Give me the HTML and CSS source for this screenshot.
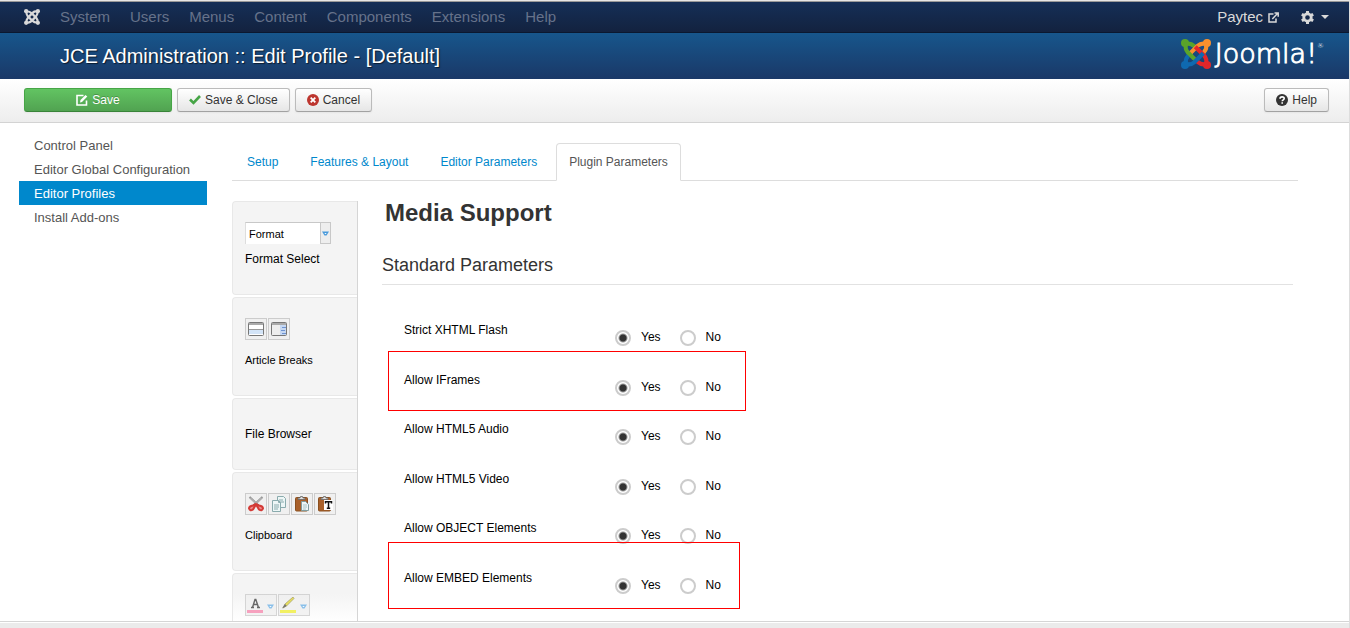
FILE: index.html
```html
<!DOCTYPE html>
<html lang="en">
<head>
<meta charset="utf-8">
<title>JCE Administration :: Edit Profile</title>
<link rel="stylesheet" href="styles.css">
</head>
<body>
<svg class="defs" aria-hidden="true">
  <defs>
    <g id="arm"><circle cx="3.2" cy="3.2" r="3.2" stroke="none"/><path d="M12.500 7.500 10.600 5.700Q7.500 3 4 4 3 8 5.400 10.600L12.600 17.800" fill="none" stroke-width="3.300"/></g>
    <g id="drop"><path d="M0 .5h7L4.500 4.500h-2z"/><path d="M2.300 2h2.400L3.500 3.200z" fill="#fff"/></g>
  </defs>
</svg>
<nav class="navbar">
  <a class="brand" href="#" aria-label="Joomla"><svg width="16" height="16" viewBox="0 0 24 24"><g class="mono"><use href="#arm"/><use href="#arm" transform="rotate(90 12 12)"/><use href="#arm" transform="rotate(180 12 12)"/><use href="#arm" transform="rotate(270 12 12)"/></g></svg></a>
  <div class="menu">
    <a href="#">System</a><a href="#">Users</a><a href="#">Menus</a><a href="#">Content</a><a href="#">Components</a><a href="#">Extensions</a><a href="#">Help</a>
  </div>
  <a class="site" href="#">Paytec <svg width="11" height="11" viewBox="0 0 11 11" fill="none" stroke="#d9d9d9" stroke-width="1.500"><path d="M5.500 2H1v8h7V6.500M4.300 7 9.500 1.500M6.500 1h3.700v3.700"/></svg></a>
  <button class="gear" aria-label="Settings"><svg width="13" height="13" viewBox="0 0 14 14"><circle cx="7" cy="7" r="4" fill="none" stroke="#d9d9d9" stroke-width="3"/><path d="M7 0v3M7 11v3M.9 3.500l2.600 1.500M10.500 9l2.600 1.500M.9 10.500 3.500 9M10.500 5l2.600-1.500" stroke="#d9d9d9" stroke-width="3.200"/></svg><svg width="8" height="4" viewBox="0 0 8 4"><path d="M0 0h8L4 4z" fill="#d9d9d9"/></svg></button>
</nav>
<header class="header">
  <h1>JCE Administration :: Edit Profile - [Default]</h1>
  <div class="logo">
    <svg width="30" height="30" viewBox="0 0 24 24"><use href="#arm" class="green"/><use href="#arm" class="orange" transform="rotate(90 12 12)"/><use href="#arm" class="red" transform="rotate(180 12 12)"/><use href="#arm" class="blue" transform="rotate(270 12 12)"/><path d="M5.400 10.600 8.500 13.700" stroke="#5aa42a" stroke-width="3.300"/></svg>
    <span class="wordmark">Joomla!<sup>®</sup></span>
  </div>
</header>
<div class="toolbar">
  <button class="btn save"><svg width="12" height="12" viewBox="0 0 12 12" fill="none" stroke="#fff" stroke-width="1.600"><path d="M7.500 1.500H1v9.500h9.500V6.500"/><path d="M4 8.500 4.500 6 9.500 1l1.800 1.500L6 8z" fill="#fff" stroke="none"/></svg>Save</button>
  <button class="btn"><svg width="12" height="12" viewBox="0 0 12 12"><path d="M1 5.500l3.500 3.500L11 2" fill="none" stroke="#46a546" stroke-width="2.600"/></svg>Save &amp; Close</button>
  <button class="btn"><svg width="12" height="12" viewBox="0 0 12 12"><circle cx="6" cy="6" r="6" fill="#bd362f"/><path d="M3.700 3.700l4.600 4.600M8.300 3.700 3.700 8.300" stroke="#fff" stroke-width="1.800"/></svg>Cancel</button>
  <button class="btn help"><svg width="12" height="12" viewBox="0 0 12 12"><circle cx="6" cy="6" r="6" fill="#333"/><path d="M4 4.700C4 2.300 8.200 2.300 8.200 4.500 8.200 5.800 6.200 5.800 6.200 7.300M6.200 8.200v1.600" fill="none" stroke="#fff" stroke-width="1.600"/></svg>Help</button>
</div>
<div class="page">
  <nav class="sidebar">
    <a href="#">Control Panel</a>
    <a href="#">Editor Global Configuration</a>
    <a href="#" class="current">Editor Profiles</a>
    <a href="#">Install Add-ons</a>
  </nav>
  <main class="main">
    <div class="tabs">
      <a href="#">Setup</a><a href="#">Features &amp; Layout</a><a href="#">Editor Parameters</a><a href="#" class="active">Plugin Parameters</a>
    </div>
    <div class="panel">
      <div class="plugins">
        <section class="card">
          <div class="combo">
            <select aria-label="Format Select"><option>Format</option></select>
            <span class="arrow"><svg width="7" height="5"><use href="#drop" fill="#4a9bdc"/></svg></span>
          </div>
          <p>Format Select</p>
        </section>
        <section class="card">
          <div class="icons">
            <button aria-label="Read more"><svg width="16" height="14" viewBox="0 0 16 14"><rect x=".5" y=".5" width="15" height="13" rx="1" fill="#fff" stroke="#777"/><path d="M1 1h14v2H1z" fill="#aaa"/><path d="M1 8h14v4H1z" fill="#d3e4f7"/><path d="M1 7.500h14" stroke="#999"/></svg></button>
            <button aria-label="Page break"><svg width="16" height="14" viewBox="0 0 16 14"><rect x=".5" y=".5" width="15" height="13" rx="1" fill="#eee" stroke="#777"/><path d="M1 1h14v2H1z" fill="#aaa"/><path d="M9 3h6v10H9z" fill="#c6d8f2"/><path d="M11 5.500h4M10 8.500h4M11 11.500h4" stroke="#6e93d1"/></svg></button>
          </div>
          <p class="small">Article Breaks</p>
        </section>
        <section class="card"><p>File Browser</p></section>
        <section class="card">
          <div class="icons">
            <button aria-label="Cut"><svg width="16" height="16" viewBox="0 0 16 16" fill="none"><path d="M1.500 1 11 10M14.500 1 5 10" stroke="#888" stroke-width="2"/><path d="M2 1.500 9 8.500M14 1.500 7 8.500" stroke="#e4e4e4" stroke-width=".8"/><path d="M8 8 5 9.500Q1 10 1 12.500q1 3 4 1l3-5 3 5q3 2 4-1 0-2.500-4-3z" fill="#e88" stroke="#d33a36" stroke-width="2"/></svg></button>
            <button aria-label="Copy"><svg width="16" height="16" viewBox="0 0 16 16" fill="#edf6f6" stroke="#8aabad"><path d="M6.500.5h6l2 2v9h-8z"/><path d="M8 4h4M8 6h5"/><path d="M1.500 4.500h6l2 2v9h-8zM7.500 4.500v2h2M3 9h5M3 11h5M3 13h4"/></svg></button>
            <button aria-label="Paste"><svg width="16" height="16" viewBox="0 0 16 16"><rect x="1.500" y="1.500" width="12" height="13.500" rx="1" fill="#a9602a" stroke="#8a5020"/><path d="M4 3.500V2h2l.5-1.500h2L9 2h2v1.500z" fill="#ddd" stroke="#666" stroke-width=".8"/><path d="M7.500 5.500h4l3 3v6h-7z" fill="#edf5f5" stroke="#809c9e"/><path d="M9 9h4M9 11h4M9 13h3" stroke="#9bb7b8" stroke-width=".8"/></svg></button>
            <button aria-label="Paste as text"><svg width="16" height="16" viewBox="0 0 16 16"><rect x="1.500" y="1.500" width="12" height="13.500" rx="1" fill="#a9602a" stroke="#8a5020"/><path d="M4 3.500V2h2l.5-1.500h2L9 2h2v1.500z" fill="#ddd" stroke="#666" stroke-width=".8"/><path d="M7 4h9v10H7z" fill="#fff"/><path d="M8.500 7.500V5.700h6v1.800M11.500 5.700v7M9.800 12.300h3.400" fill="none" stroke="#111" stroke-width="1.500"/></svg></button>
          </div>
          <p class="small">Clipboard</p>
        </section>
        <section class="card">
          <div class="icons faded">
            <button class="wide" aria-label="Text colour"><svg width="28" height="16" viewBox="0 0 28 16"><path d="M5.500 10.500 8 2.500h.8L11.500 10.500M6.500 7.500h4M4 10.500h3M10 10.500h3" fill="none" stroke="#444" stroke-width="1.400"/><path d="M0 13h16v3H0z" fill="#f68bb0"/><use href="#drop" x="20" y="7" fill="#6fb2e6"/></svg></button>
            <button class="wide" aria-label="Highlight colour"><svg width="28" height="16" viewBox="0 0 28 16"><path d="M3 11 5 7l8-7 1 1.500L6.500 9z" fill="#e5d934" stroke="#8b8648" stroke-width=".7"/><path d="M2 11.500 5 7l1.700 2z" fill="#555"/><path d="M0 13h16v3H0z" fill="#f0ee3e"/><use href="#drop" x="20" y="7" fill="#6fb2e6"/></svg></button>
          </div>
        </section>
      </div>
      <div class="params">
        <h2>Media Support</h2>
        <h3>Standard Parameters</h3>
        <div class="rows">
          <div class="row" role="radiogroup" aria-labelledby="p1"><span id="p1" class="name">Strict XHTML Flash</span><label><input type="radio" name="r1" checked>Yes</label><label><input type="radio" name="r1">No</label></div>
          <div class="row" role="radiogroup" aria-labelledby="p2"><span id="p2" class="name">Allow IFrames</span><label><input type="radio" name="r2" checked>Yes</label><label><input type="radio" name="r2">No</label><div class="mark iframes"></div></div>
          <div class="row" role="radiogroup" aria-labelledby="p3"><span id="p3" class="name">Allow HTML5 Audio</span><label><input type="radio" name="r3" checked>Yes</label><label><input type="radio" name="r3">No</label></div>
          <div class="row" role="radiogroup" aria-labelledby="p4"><span id="p4" class="name">Allow HTML5 Video</span><label><input type="radio" name="r4" checked>Yes</label><label><input type="radio" name="r4">No</label></div>
          <div class="row" role="radiogroup" aria-labelledby="p5"><span id="p5" class="name">Allow OBJECT Elements</span><label><input type="radio" name="r5" checked>Yes</label><label><input type="radio" name="r5">No</label></div>
          <div class="row" role="radiogroup" aria-labelledby="p6"><span id="p6" class="name">Allow EMBED Elements</span><label><input type="radio" name="r6" checked>Yes</label><label><input type="radio" name="r6">No</label><div class="mark embed"></div></div>
        </div>
      </div>
    </div>
  </main>
</div>
<footer class="status"></footer>
</body>
</html>
```
FILE: styles.css
```css
* { box-sizing: border-box; }
body {
  margin: 0;
  height: 100vh;
  display: flex;
  flex-direction: column;
  overflow: hidden;
  background: #fff;
  border-top: 1px solid #e6e6e6;
  border-right: 1px solid #ddd;
  font: 12px/20px "Liberation Sans", Arial, sans-serif;
  color: #000;
}
a { text-decoration: none; color: #08c; }
button { font: inherit; padding: 0; cursor: pointer; }
svg { display: block; flex: none; }
h1, h2, h3, p { margin: 0; font-weight: normal; }
.defs { position: absolute; width: 0; height: 0; }

.navbar {
  display: flex;
  align-items: center;
  flex: none;
  height: 32px;
  padding: 0 20px 0 24px;
  border-top: 1px solid #999;
  border-bottom: 1px solid #0b1830;
  background: linear-gradient(#152f57, #13223f);
  font-size: 15px;
}
.mono { fill: #d9d9d9; stroke: #d9d9d9; }
.menu { display: flex; gap: 20px; margin-left: 20px; }
.menu a { color: #66728a; }
.site { display: flex; align-items: center; gap: 5px; margin-left: auto; color: #d9d9d9; }
.gear { display: flex; align-items: center; gap: 7px; margin-left: 22px; border: 0; background: none; }

.header {
  display: flex;
  align-items: center;
  justify-content: space-between;
  flex: none;
  height: 46px;
  padding: 0 25px 0 60px;
  background: linear-gradient(#17568c, #1a3867);
}
.header h1 { font-size: 20px; line-height: 24px; color: #fff; text-shadow: 1px 1px 1px #00000099; }
.logo { display: flex; align-items: center; gap: 4px; height: 36px; margin-bottom: 5px; }
.green { fill: #5aa42a; stroke: #5aa42a; }
.orange { fill: #f9902d; stroke: #f9902d; }
.red { fill: #e4262a; stroke: #e4262a; }
.blue { fill: #0f69b0; stroke: #0f69b0; }
.wordmark { display: flex; font: 200 27px/32px "DejaVu Sans", sans-serif; color: #fff; -webkit-text-stroke: 1px #fff; }
.wordmark sup { font-size: 7px; line-height: 16px; -webkit-text-stroke: 0; }

.toolbar {
  display: flex;
  align-items: center;
  flex: none;
  gap: 5px;
  height: 44px;
  padding: 0 20px 2px 24px;
  border-bottom: 1px solid #d3d3d3;
  background: linear-gradient(#fff, #ededed);
}
.btn {
  display: flex;
  align-items: center;
  justify-content: center;
  gap: 4px;
  height: 24px;
  padding: 0 11px;
  border: 1px solid #bbb;
  border-bottom-color: #a2a2a2;
  border-radius: 3px;
  background: linear-gradient(#fff, #e6e6e6);
  box-shadow: 0 1px 2px #0000000d;
  color: #333;
}
.save {
  width: 148px;
  border-color: #46a546 #46a546 #398439;
  background: linear-gradient(#62c462, #51a351);
  color: #fff;
  text-shadow: 0 -1px 0 #00000040;
}
.help { margin-left: auto; }

.page { display: flex; flex: 1; min-height: 0; gap: 25px; padding: 10px 51px 0 19px; overflow: hidden; }
.sidebar { flex: none; width: 188px; font-size: 13px; line-height: 22px; }
.sidebar a { display: block; padding: 2px 15px 0; color: #555; }
.sidebar .current { background: #08c; color: #fff; }
.main { flex: 1; min-width: 0; padding-top: 10px; }
.tabs { display: flex; gap: 6px; padding-left: 2px; border-bottom: 1px solid #ddd; }
.tabs a { padding: 8px 12px; border: 1px solid transparent; margin-bottom: -1px; }
.tabs .active { border-color: #ddd #ddd #fff; border-radius: 4px 4px 0 0; background: #fff; color: #555; }

.panel { display: flex; gap: 24px; padding: 20px 5px 0 0; }
.plugins { display: flex; flex-direction: column; gap: 2px; flex: none; width: 126px; border-right: 1px solid #d5d5d5; }
.card { padding: 20px 12px 25px; border: 1px solid #e8e8e8; border-right: 0; border-radius: 4px 0 0 4px; background: #f4f4f4; }
.card:last-child { background: linear-gradient(#f4f4f4 20px, #fff 48px); }
.card p { margin-top: 5px; }
.card .small { margin-top: 10px; font-size: 11px; }
.combo { display: flex; width: 86px; height: 22px; border: 1px solid #c8c8c8; border-bottom: 0; border-left-color: #ddd; background: #fff; }
.combo select { flex: 1; min-width: 0; padding: 0 3px; appearance: none; border: 0; background: none; font: inherit; font-size: 11px; color: #000; }
.arrow { display: flex; align-items: center; justify-content: center; width: 10px; border-left: 1px solid #c8c8c8; border-bottom: 1px solid #c8c8c8; background: #eee; }
.icons { display: flex; gap: 1px; }
.icons button { display: flex; align-items: center; justify-content: center; width: 22px; height: 22px; border: 1px solid #ccc; background: #f0f0f0; }
.icons .wide { width: 32px; }
.faded { opacity: .8; }

.params { flex: 1; min-width: 0; }
.params h2 { padding-left: 3px; font-size: 24px; line-height: 24px; font-weight: bold; color: #333; }
.params h3 { padding: 30px 0 9px; border-bottom: 1px solid #e2e2e2; font-size: 18px; line-height: 20px; color: #333; }
.rows { padding: 35px 22px 0; }
.row { position: relative; display: flex; align-items: flex-start; gap: 19px; min-height: 49px; }
.row:nth-child(odd) { min-height: 50px; }
.name { width: 192px; }
.row label { display: flex; align-items: center; gap: 10px; padding-top: 7px; }
.row input {
  appearance: none;
  width: 16px;
  height: 16px;
  margin: 1px 0 0;
  border: 2px solid #ccc;
  border-radius: 50%;
  background: #fff;
}
.row input:checked { background: radial-gradient(circle, #333 3px, #fff 5px); }
.mark { position: absolute; left: -16px; border: 1px solid #f00; pointer-events: none; }
.iframes { top: -19px; width: 358px; height: 60px; }
.embed { top: -26px; width: 352px; height: 67px; }

.status { flex: none; height: 7px; border-top: 1px solid #d5d5d5; background: linear-gradient(#fff 1px, #ebebeb 1px); }
```
